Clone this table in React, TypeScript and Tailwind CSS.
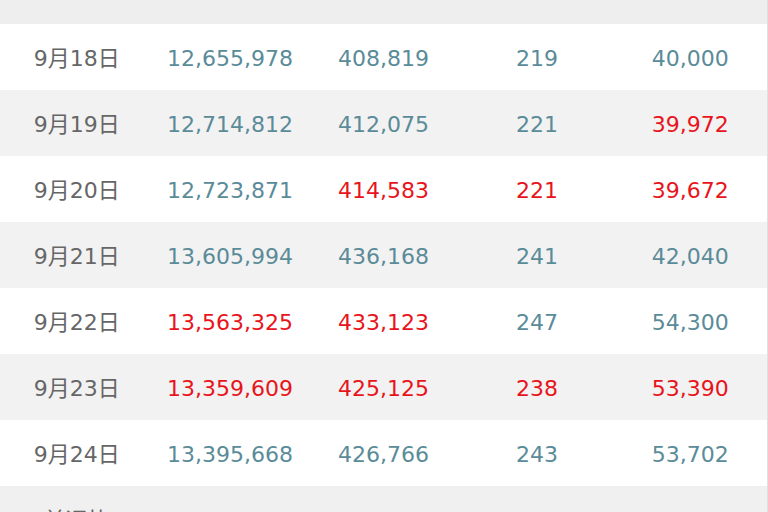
import React from "react";

type Cell = { v: string; red?: boolean };
type Row = { date: string; cells: Cell[] };

const rows: Row[] = [
  { date: "9月18日", cells: [{ v: "12,655,978" }, { v: "408,819" }, { v: "219" }, { v: "40,000" }] },
  { date: "9月19日", cells: [{ v: "12,714,812" }, { v: "412,075" }, { v: "221" }, { v: "39,972", red: true }] },
  { date: "9月20日", cells: [{ v: "12,723,871" }, { v: "414,583", red: true }, { v: "221", red: true }, { v: "39,672", red: true }] },
  { date: "9月21日", cells: [{ v: "13,605,994" }, { v: "436,168" }, { v: "241" }, { v: "42,040" }] },
  { date: "9月22日", cells: [{ v: "13,563,325", red: true }, { v: "433,123", red: true }, { v: "247" }, { v: "54,300" }] },
  { date: "9月23日", cells: [{ v: "13,359,609", red: true }, { v: "425,125", red: true }, { v: "238", red: true }, { v: "53,390", red: true }] },
  { date: "9月24日", cells: [{ v: "13,395,668" }, { v: "426,766" }, { v: "243" }, { v: "53,702" }] },
];

const font = { fontFamily: '"DejaVu Sans", "Noto Sans CJK JP", sans-serif' };

export default function App() {
  return (
    <div className="w-[768px] h-[512px] overflow-hidden bg-white" style={font}>
      <div className="-mt-[42px] flex flex-col border-r border-[#e0e0e0]">
        <div className="grid grid-cols-5 h-[66px] bg-[#eeeeee] items-center pb-4 text-[22px] text-[#666666]">
          <div className="text-center">日付</div>
          <div className="text-center">総数</div>
          <div className="text-center">件数</div>
          <div className="text-center">人数</div>
          <div className="text-center">件数</div>
        </div>
        {rows.map((r, i) => (
          <div
            key={r.date}
            className={
              "grid grid-cols-5 h-[66px] items-center pt-0.5 text-[22px] " +
              (i % 2 === 0 ? "bg-white" : "bg-[#f2f2f2]")
            }
          >
            <div className="text-center text-[#666666]">{r.date}</div>
            {r.cells.map((c, j) => (
              <div
                key={j}
                className={"text-center " + (c.red ? "text-[#e8141c]" : "text-[#5a8b98]")}
              >
                {c.v}
              </div>
            ))}
          </div>
        ))}
        <div className="grid grid-cols-5 h-[66px] bg-[#f0f0f0] items-center pt-0.5 text-[22px]">
          <div className="text-center text-[#666666]">前週比</div>
          <div className="text-center text-[#5a8b98]">5.84%</div>
          <div className="text-center text-[#5a8b98]">4.39%</div>
          <div className="text-center text-[#5a8b98]">10.96%</div>
          <div className="text-center text-[#5a8b98]">34.26%</div>
        </div>
      </div>
    </div>
  );
}
